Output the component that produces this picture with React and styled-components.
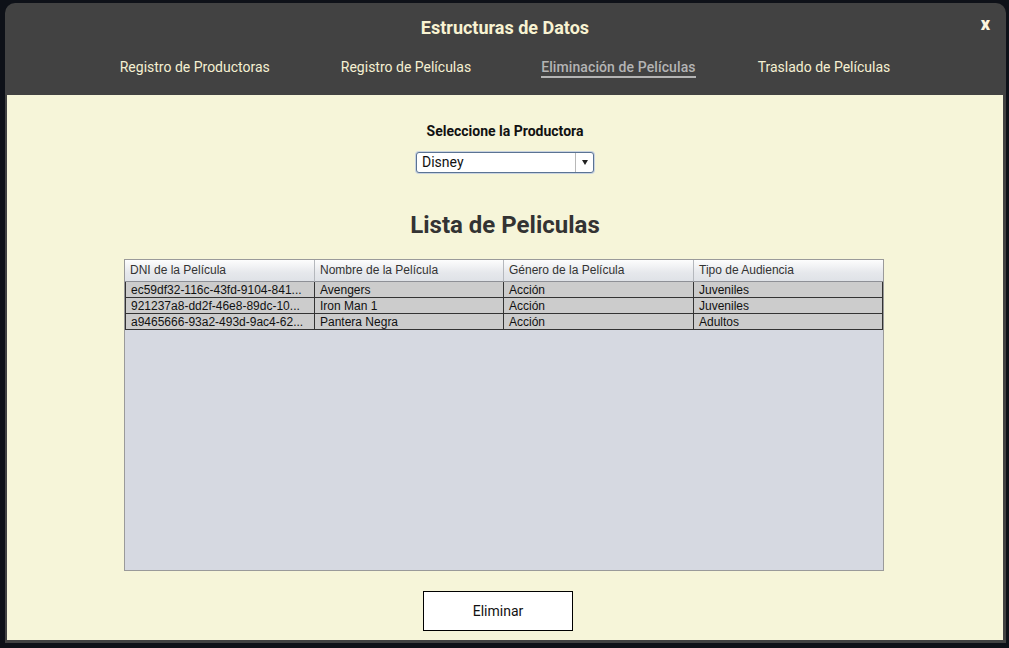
import React from "react";
import styled, { createGlobalStyle } from "styled-components";

const Global = createGlobalStyle`
  html, body { margin: 0; padding: 0; background: #0e1118; }
  body { font-family: Roboto, "Liberation Sans", sans-serif; }
`;

const Page = styled.div`
  width: 1009px;
  height: 648px;
  padding: 3px 3px 5px 5px;
  box-sizing: border-box;
  background: #0e1118;
`;

const Window = styled.div`
  height: 100%;
  background: #424242;
  border-radius: 10px 10px 0 0;
  padding: 0 3px 3px 2px;
  box-sizing: border-box;
  display: flex;
  flex-direction: column;
`;

const Header = styled.header`
  height: 92px;
  position: relative;
  display: flex;
  flex-direction: column;
  align-items: center;
  padding-top: 14px;
  box-sizing: border-box;
`;

const Title = styled.h1`
  margin: 0;
  font-family: Roboto, sans-serif;
  font-size: 18px;
  line-height: 22px;
  font-weight: 700;
  color: #f8f3d2;
`;

const Close = styled.span`
  position: absolute;
  right: 13px;
  top: 10px;
  font-family: Roboto, sans-serif;
  font-weight: 900;
  font-size: 18px;
  color: #fbf6e0;
`;

const Tabs = styled.nav`
  display: flex;
  margin-top: 20px;
`;

const Tab = styled.span`
  font-family: Roboto, sans-serif;
  font-size: 14px;
  line-height: 16px;
  padding-bottom: 1px;
  margin-left: ${(p) => p.$gap}px;
  color: ${(p) => (p.$active ? "#b4b4b4" : "#f5f0d2")};
  font-weight: ${(p) => (p.$active ? 500 : 400)};
  letter-spacing: ${(p) => (p.$active ? "0.1px" : "0")};
  border-bottom: 2px solid ${(p) => (p.$active ? "#b4b4b4" : "transparent")};
`;

const Content = styled.main`
  flex: 1;
  background: #f6f5d9;
  display: flex;
  flex-direction: column;
  align-items: center;
  padding-top: 28px;
`;

const Label = styled.div`
  font-family: Roboto, sans-serif;
  font-weight: 700;
  font-size: 14px;
  line-height: 16px;
  color: #111;
`;

const Select = styled.div`
  margin-top: 13px;
  width: 178px;
  height: 21px;
  box-sizing: border-box;
  border: 1px solid #5a7393;
  border-radius: 3px;
  background: #fff;
  display: flex;
  align-items: stretch;
  box-shadow: 0 0 0 1px #c9d3e0;
`;

const SelectValue = styled.span`
  flex: 1;
  padding-left: 5px;
  font-family: Roboto, sans-serif;
  font-size: 14px;
  line-height: 19px;
  color: #111;
`;

const Arrow = styled.span`
  width: 17px;
  border-left: 1px solid #b8b8b8;
  display: flex;
  align-items: center;
  justify-content: center;
  &::after {
    content: "";
    border-left: 3.5px solid transparent;
    border-right: 3.5px solid transparent;
    border-top: 5px solid #222;
  }
`;

const Heading = styled.h2`
  margin: 38px 0 0;
  font-family: Roboto, sans-serif;
  font-size: 24px;
  line-height: 28px;
  font-weight: 700;
  color: #333;
`;

const Table = styled.div`
  margin: 20px 2px 0 0;
  width: 760px;
  height: 312px;
  box-sizing: border-box;
  border: 1px solid #9a9a9a;
  background: #d6d9e1;
  display: flex;
  flex-direction: column;
`;

const Row = styled.div`
  display: grid;
  grid-template-columns: 190px 189px 190px 1fr;
`;

const HeadCell = styled.div`
  height: 22px;
  box-sizing: border-box;
  padding-left: 5px;
  font-family: "Liberation Sans", Arial, sans-serif;
  font-size: 12px;
  line-height: 21px;
  color: #333;
  background: linear-gradient(#fdfdfd, #e6e8ec 60%, #dfe2e7);
  border-right: 1px solid #b5b8bd;
  border-bottom: 1px solid #8e9096;
  &:last-child { border-right: none; }
`;

const Cell = styled.div`
  height: 16px;
  box-sizing: border-box;
  padding-left: 5px;
  font-family: "Liberation Sans", Arial, sans-serif;
  font-size: 12px;
  line-height: 16px;
  color: #111;
  background: #cccccc;
  border-right: 1px solid #333;
  border-bottom: 1px solid #333;
  white-space: nowrap;
  overflow: hidden;
  &:first-child { border-left: 1px solid #333; }
`;

const Button = styled.button`
  margin: 20px 14px 0 0;
  width: 150px;
  height: 40px;
  background: #fff;
  border: 1px solid #000;
  font-family: Roboto, sans-serif;
  font-size: 14px;
  color: #111;
  padding: 0;
`;

const rows = [
  ["ec59df32-116c-43fd-9104-841...", "Avengers", "Acción", "Juveniles"],
  ["921237a8-dd2f-46e8-89dc-10...", "Iron Man 1", "Acción", "Juveniles"],
  ["a9465666-93a2-493d-9ac4-62...", "Pantera Negra", "Acción", "Adultos"],
];

const tabs = [
  { label: "Registro de Productoras", gap: 0 },
  { label: "Registro de Películas", gap: 71 },
  { label: "Eliminación de Películas", gap: 70 },
  { label: "Traslado de Películas", gap: 62 },
];

export default function App() {
  return (
    <>
      <Global />
      <Page>
        <Window>
          <Header>
            <Title>Estructuras de Datos</Title>
            <Close>x</Close>
            <Tabs>
              {tabs.map((t, i) => (
                <Tab key={t.label} $gap={t.gap} $active={i === 2}>{t.label}</Tab>
              ))}
            </Tabs>
          </Header>
          <Content>
            <Label>Seleccione la Productora</Label>
            <Select>
              <SelectValue>Disney</SelectValue>
              <Arrow />
            </Select>
            <Heading>Lista de Peliculas</Heading>
            <Table>
              <Row>
                <HeadCell>DNI de la Película</HeadCell>
                <HeadCell>Nombre de la Película</HeadCell>
                <HeadCell>Género de la Película</HeadCell>
                <HeadCell>Tipo de Audiencia</HeadCell>
              </Row>
              {rows.map((r) => (
                <Row key={r[0]}>
                  {r.map((c, i) => (
                    <Cell key={i}>{c}</Cell>
                  ))}
                </Row>
              ))}
            </Table>
            <Button>Eliminar</Button>
          </Content>
        </Window>
      </Page>
    </>
  );
}
